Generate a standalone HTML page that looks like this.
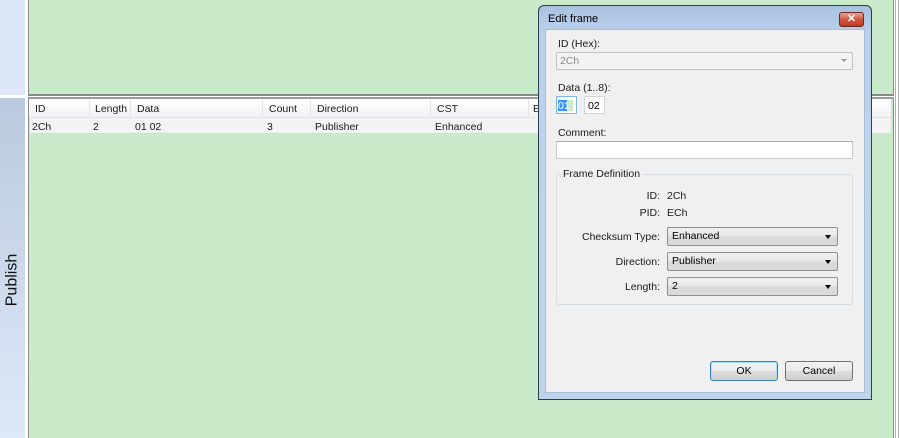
<!DOCTYPE html>
<html><head><style>
*{box-sizing:border-box;margin:0;padding:0}
body{width:900px;height:438px;position:relative;background:#fff;font-family:"Liberation Sans",sans-serif;font-size:11px;color:#000;overflow:hidden}
.a{position:absolute}
.t{font-size:10.5px;color:#1a1a1a}
.r{position:absolute;right:240px;font-size:10.5px;color:#1a1a1a;text-align:right;white-space:nowrap}
.combo{position:absolute;height:19px;border:1px solid #8e8f8f;border-radius:2px;background:linear-gradient(#f2f2f2,#e6e6e6 50%,#d9d9d9 51%,#dadada);font-size:10.5px;padding:2px 4px}
.combo:after{content:"";position:absolute;right:6px;top:7px;border-left:3.5px solid transparent;border-right:3.5px solid transparent;border-top:4px solid #000}
.btn{position:absolute;height:20px;border:1px solid #707070;border-radius:3px;background:linear-gradient(#f2f2f2,#ebebeb 50%,#dddddd 51%,#cfcfcf);text-align:center;font-size:10.5px;line-height:18px}
</style></head><body>
<div class="a" style="left:0;top:0;width:25px;height:95px;background:#dde7f7"></div>
<div class="a" style="left:0;top:98px;width:25px;height:340px;background:linear-gradient(#b9cadf,#d0dcee 60%,#dfe8f7)"></div>
<div class="a" style="left:-20px;top:270px;width:65px;height:20px;transform:rotate(-90deg);font-size:16px;color:#111;white-space:nowrap;text-align:center;line-height:20px">Publish</div>
<div class="a" style="left:28px;top:0;width:866px;height:96px;background:#c8ecca;border:1px solid #8a8a8a;border-top:none;border-bottom:2px solid #8a8a8a"></div>
<div class="a" style="left:28px;top:97px;width:866px;height:341px;background:#c8ecca;border-left:1px solid #8a8a8a;border-right:1px solid #8a8a8a;border-top:2px solid #9a9a9a"></div>
<div class="a" style="left:29px;top:99px;width:862px;height:19px;background:linear-gradient(#fff,#f1f2f5);border-bottom:1px solid #e2e2e2"></div>
<div class="a" style="left:29px;top:118px;width:862px;height:16px;background:#f3f3f3;border-bottom:1px solid #d8d8d8;border-left:1px solid #ddd"></div>
<div class="a" style="left:89px;top:99px;width:1px;height:19px;background:#e4e4e4"></div>
<div class="a" style="left:130px;top:99px;width:1px;height:19px;background:#e4e4e4"></div>
<div class="a" style="left:262px;top:99px;width:1px;height:19px;background:#e4e4e4"></div>
<div class="a" style="left:310px;top:99px;width:1px;height:19px;background:#e4e4e4"></div>
<div class="a" style="left:430px;top:99px;width:1px;height:19px;background:#e4e4e4"></div>
<div class="a" style="left:528px;top:99px;width:1px;height:19px;background:#e4e4e4"></div>
<div class="a t" style="left:35px;top:103px">ID</div>
<div class="a t" style="left:95px;top:103px">Length</div>
<div class="a t" style="left:137px;top:103px">Data</div>
<div class="a t" style="left:269px;top:103px">Count</div>
<div class="a t" style="left:317px;top:103px">Direction</div>
<div class="a t" style="left:437px;top:103px">CST</div>
<div class="a t" style="left:533px;top:103px">E</div>
<div class="a t" style="left:32px;top:121px">2Ch</div>
<div class="a t" style="left:93px;top:121px">2</div>
<div class="a t" style="left:135px;top:121px">01 02</div>
<div class="a t" style="left:267px;top:121px">3</div>
<div class="a t" style="left:315px;top:121px">Publisher</div>
<div class="a t" style="left:435px;top:121px">Enhanced</div>
<div class="a" style="left:895px;top:0;width:1px;height:438px;background:#b0b0b0"></div>
<div class="a" style="left:898px;top:0;width:1px;height:438px;background:#b0b0b0"></div>
<div class="a" style="left:538px;top:5px;width:334px;height:395px;border:1px solid #2d3c4e;border-radius:6px 6px 0 0;background:linear-gradient(#a9c2e0,#bcd2ec 30px,#bfd4ec)"></div>
<div class="a" style="left:548px;top:13px;font-size:11px;color:#000">Edit frame</div>
<div class="a" style="left:839px;top:12px;width:25px;height:15px;border:1px solid #6b2b22;border-radius:3px;background:linear-gradient(#e9a596,#d0563e 50%,#c23a22);color:#fff;font-weight:bold;font-size:11px;text-align:center;line-height:13px">✕</div>
<div class="a" style="left:545px;top:29px;width:320px;height:364px;background:#f0f0f0;border:1px solid #a9bdd6"></div>
<div class="a t" style="left:558px;top:38px">ID (Hex):</div>
<div class="a" style="left:556px;top:52px;width:297px;height:18px;border:1px solid #c2c2c2;border-radius:2px;background:#f3f3f3;color:#8a8a8a;font-size:10.5px;padding:2px 3px">2Ch<span style="position:absolute;right:5px;top:6px;border-left:3px solid transparent;border-right:3px solid transparent;border-top:3px solid #9a9a9a"></span></div>
<div class="a t" style="left:558px;top:82px">Data (1..8):</div>
<div class="a" style="left:556px;top:96px;width:21px;height:18px;border:1px solid #7eb4ea;background:#fff"><div style="position:absolute;left:1px;top:3px;width:9px;height:11px;background:#3399ff"></div><div style="position:absolute;left:10px;top:3px;width:6px;height:11px;background:#c8ecca"></div><span style="position:absolute;left:1px;top:3px;font-size:10.5px;color:#fff">01</span></div>
<div class="a" style="left:584px;top:96px;width:21px;height:18px;border:1px solid #d5d5d5;background:#fff;font-size:10.5px;padding:3px 3px">02</div>
<div class="a t" style="left:558px;top:127px">Comment:</div>
<div class="a" style="left:556px;top:141px;width:297px;height:18px;border:1px solid #c8c8c8;border-top-color:#adadad;background:#fff"></div>
<div class="a" style="left:556px;top:174px;width:297px;height:131px;border:1px solid #d8dde3;border-radius:3px"></div>
<div class="a t" style="left:561px;top:168px;background:#f0f0f0;padding:0 2px">Frame Definition</div>
<div class="r" style="top:190px">ID:</div><div class="a t" style="left:667px;top:190px">2Ch</div>
<div class="r" style="top:207px">PID:</div><div class="a t" style="left:667px;top:207px">ECh</div>
<div class="r" style="top:231px">Checksum Type:</div>
<div class="combo" style="left:667px;top:227px;width:171px">Enhanced</div>
<div class="r" style="top:256px">Direction:</div>
<div class="combo" style="left:667px;top:252px;width:171px">Publisher</div>
<div class="r" style="top:281px">Length:</div>
<div class="combo" style="left:667px;top:277px;width:171px">2</div>
<div class="btn" style="left:710px;top:361px;width:68px;border-color:#3c7fb1;box-shadow:inset 0 0 0 1px #9ee1fb">OK</div>
<div class="btn" style="left:785px;top:361px;width:68px">Cancel</div>
</body></html>
